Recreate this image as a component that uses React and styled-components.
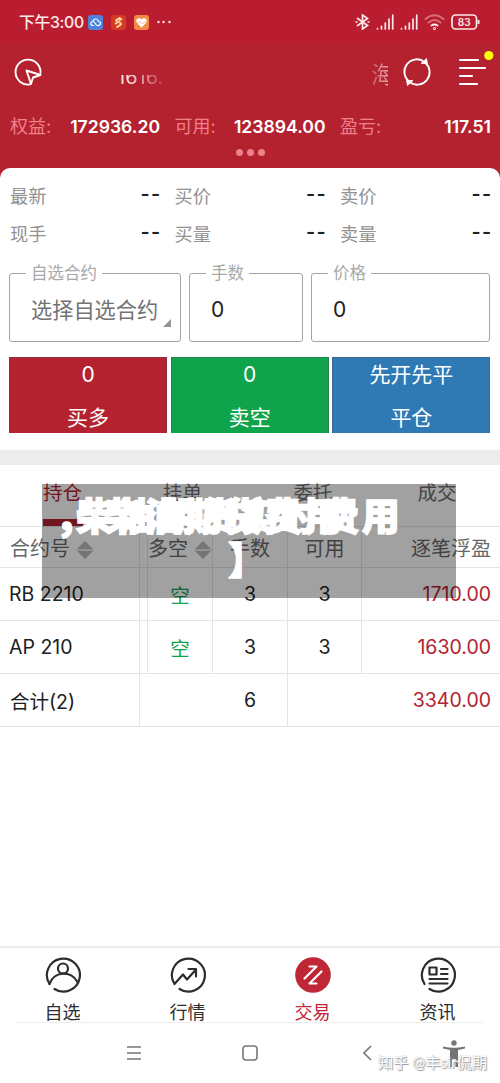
import React from 'react';
import styled, { createGlobalStyle } from 'styled-components';

const colours = {
  red: '#b42230',
  green: '#0fa44c',
  blue: '#2f7ab5',
  pink: '#f0808b',
  text: '#202020',
  muted: '#929292',
  line: '#e4e4e4'
};

const GlobalStyle = createGlobalStyle`
  * { box-sizing: border-box; }
  body {
    margin: 0;
    background: #fff;
    font-family: Inter, "Noto Sans CJK SC", sans-serif;
    color: ${ colours.text };
  }
`;

const Screen = styled.div`
  position: relative;
  display: flex;
  flex-direction: column;
  width: 500px;
  height: 1083px;
  overflow: hidden;
  background: #fff;
`;

const StatusBar = styled.div`
  display: flex;
  align-items: center;
  justify-content: space-between;
  height: 44px;
  padding: 0 20px 0 19px;
  background: #b91d2f;
  color: #fce9ea;
`;

const Clock = styled.span`
  width: 69px;
  font-size: 15.8px;
  font-weight: 500;
  line-height: 24px;
  letter-spacing: -0.3px;
  padding-top: 1px;
  white-space: nowrap;
`;

const StatusGroup = styled.div`
  display: flex;
  align-items: center;
  gap: ${ props => props.gap }px;
`;

const Header = styled.header`
  height: 136px;
  flex: none;
  background: ${ colours.red };
  color: #fff;
`;

const TitleRow = styled.div`
  display: flex;
  align-items: center;
  height: 56px;
  padding: 0 5px 0 13px;
`;

const Faded = styled.div`
  height: ${ props => props.h }px;
  width: ${ props => props.w }px;
  margin-left: ${ props => props.gap }px;
  margin-top: ${ props => props.drop || 0 }px;
  display: flex;
  align-items: flex-end;
  overflow: hidden;
  white-space: nowrap;
  font-size: ${ props => props.size }px;
  line-height: ${ props => props.size }px;
  color: #f8dfe1;
  mask-image: linear-gradient(${ props => props.fade });
`;

const IconSlot = styled.div`
  display: flex;
  margin-left: ${ props => props.gap || 0 }px;
`;

const Balances = styled.div`
  display: grid;
  grid-template-columns: 150px 151px 151px;
  column-gap: 14.5px;
  height: 52px;
  padding: 2px 0 0 10px;
  align-items: center;
  font-size: 18px;
`;

const Pair = styled.div`
  display: flex;
  justify-content: space-between;
  align-items: center;
  white-space: nowrap;
  line-height: 24px;
`;

const BalanceLabel = styled.span`
  color: ${ colours.pink };
`;

const BalanceValue = styled.span`
  font-weight: 600;
  font-size: 17.6px;
`;

const Dots = styled.div`
  display: flex;
  justify-content: center;
  gap: 4px;
  margin-top: -3px;
`;

const Dot = styled.span`
  width: 7px;
  height: 7px;
  border-radius: 50%;
  background: ${ colours.pink };
`;

const Panel = styled.section`
  height: 282px;
  flex: none;
  margin-top: -12px;
  padding-top: 9px;
  border-radius: 10px 10px 0 0;
  background: #fff;
`;

const Quotes = styled.div`
  display: grid;
  grid-template-columns: 150px 151px 151px;
  grid-auto-rows: 38px;
  column-gap: 14.5px;
  padding: 0 0 0 10px;
`;

const QuoteLabel = styled.span`
  font-size: 18.2px;
  color: ${ colours.muted };
`;

const Dashes = styled.span`
  font-family: Lato, sans-serif;
  font-size: 26px;
  letter-spacing: 0.7px;
  margin: -7px -1px 0 0;
`;

const Fields = styled.div`
  display: grid;
  grid-template-columns: 172px 114px 179px;
  column-gap: 8px;
  padding: 11px 0 0 9px;
`;

const Field = styled.fieldset`
  position: relative;
  height: 78px;
  min-width: 0;
  margin: 0;
  padding: 0 0 0 21px;
  border: 1px solid #a4a4a4;
  border-radius: 3px;
  display: flex;
  align-items: center;
  font-size: ${ props => props.big ? 21.2 : 21 }px;
  color: ${ props => props.big ? '#737373' : colours.text };
  white-space: nowrap;
`;

const Legend = styled.legend`
  margin-left: -5px;
  padding: 0 5px;
  font-size: 16.5px;
  line-height: 18px;
  color: #a8a8a8;
`;

const FieldValue = styled.span`
  line-height: 30px;
  padding-bottom: 3px;
`;

const Corner = styled.i`
  position: absolute;
  right: 9px;
  bottom: 14px;
  border-left: 8px solid transparent;
  border-bottom: 8px solid #949494;
`;

const Orders = styled.div`
  display: grid;
  grid-template-columns: repeat(3, 158px);
  column-gap: 3.7px;
  padding: 15px 0 0 9px;
`;

const OrderButton = styled.button`
  display: flex;
  flex-direction: column;
  justify-content: space-between;
  align-items: center;
  height: 76px;
  border: 1px solid rgba(80, 80, 80, 0.4);
  border-bottom-width: 0;
  padding: 1px 0 0;
  background: ${ props => props.bg };
  color: #fff;
  font: 21px/31px Inter, "Noto Sans CJK SC", sans-serif;
`;

const Divider = styled.div`
  height: 15px;
  flex: none;
  background: #ececec;
`;

const Tabs = styled.div`
  display: grid;
  grid-template-columns: 125px 115px 146px 102px;
  height: 62px;
  border-bottom: 1px solid ${ colours.line };
  flex: none;
`;

const Tab = styled.div`
  display: flex;
  flex-direction: column;
  align-items: center;
  justify-content: space-between;
  padding-top: 14px;
  font-size: 19.5px;
  line-height: 28px;
  color: ${ props => props.active ? '#b42230' : '#6d6d6d' };
  &:after {
    content: "";
    width: 40px;
    height: 7px;
    background: ${ props => props.active ? '#b42230' : 'transparent' };
  }
`;

const Row = styled.div`
  display: grid;
  grid-template-columns: ${ props => props.total ? '140px 148px 212px' : '140px 8px 65px 75px 74px 138px' };
  height: ${ props => props.head ? 41 : 53 }px;
  flex: none;
  border-bottom: 1px solid ${ colours.line };
  font-size: ${ props => props.head ? 20 : 19.5 }px;
  color: ${ props => props.head ? '#686868' : colours.text };
`;

const Cell = styled.div`
  display: flex;
  align-items: center;
  justify-content: ${ props => props.align || 'center' };
  padding: ${ props => props.pad || '0' };
  border-right: ${ props => props.last ? 0 : 1 }px solid ${ colours.line };
  color: ${ props => props.tone || 'inherit' };
  white-space: nowrap;
  min-width: 0;
`;

const Sort = styled.i`
  flex: none;
  width: 18px;
  height: 18px;
  margin-left: 6px;
  margin-top: 6px;
  background: linear-gradient(#b9b9b9 0 8px, #e8e8e8 8px 10px, #b9b9b9 10px);
  clip-path: polygon(50% 0, 100% 50%, 50% 100%, 0 50%);
`;

const Banner = styled.div`
  position: absolute;
  left: 42px;
  top: 484px;
  width: 414px;
  height: 114px;
  background: rgba(0, 0, 0, 0.37);
  color: #fff;
`;

const BannerText = styled.span`
  position: absolute;
  left: ${ props => props.x }px;
  top: ${ props => props.y }px;
  font-family: "Noto Sans CJK SC", sans-serif;
  font-size: 38px;
  font-weight: 900;
  letter-spacing: ${ props => props.track || 0 }px;
  line-height: 46px;
  white-space: nowrap;
  -webkit-text-stroke: 1.4px #fff;
`;

const Spacer = styled.div`
  flex: 1;
`;

const BottomNav = styled.nav`
  display: grid;
  grid-template-columns: repeat(4, 1fr);
  height: 76px;
  flex: none;
  border-top: 2px solid #ececec;
`;

const NavItem = styled.div`
  display: flex;
  flex-direction: column;
  align-items: center;
  padding-top: 9px;
  gap: 7px;
  font-size: 18px;
  line-height: 26px;
  color: ${ props => props.active ? '#bf2636' : '#2d2d2d' };
`;

const SystemNav = styled.div`
  position: relative;
  display: flex;
  align-items: center;
  height: 61px;
  flex: none;
  margin: 0 17px;
  border-top: 1px solid #eee;
`;

const Watermark = styled.div`
  position: absolute;
  left: 361px;
  top: 28px;
  font-family: Lato, "Noto Sans CJK SC", sans-serif;
  font-size: 15.3px;
  line-height: 22px;
  color: #fff;
  text-shadow: 0 0 1px #999, 1px 1px 1px #999;
  white-space: nowrap;
`;

const AppIcon = ({ bg, children }) => (
  <svg width='15' height='15' viewBox='0 0 15 15' fill='none' stroke='#fff' strokeWidth='1.4'>
    <rect width='15' height='15' rx='3' fill={ bg } stroke='none' />
    { children }
  </svg>
);

const Signal = () => (
  <svg width='18' height='16' stroke='#fce9ea' strokeWidth='1.7' strokeLinecap='round'>
    <path d='M1.5 14.8v-.3M5.5 15v-2.7M9.3 15V9.2M13 15V5M16.7 15V1.2' />
  </svg>
);

const NavIcon = ({ children }) => (
  <svg width='36' height='36' viewBox='0 0 36 36' fill='none' stroke='#2d2d2d' strokeWidth='2.2' strokeLinecap='round' strokeLinejoin='round'>
    { children }
  </svg>
);

const balances = [['权益:', '172936.20'], ['可用:', '123894.00'], ['盈亏:', '117.51']];
const quotes = ['最新', '买价', '卖价', '现手', '买量', '卖量'];
const positions = [
  { name: 'RB 2210', qty: 3, free: 3, profit: '1710.00' },
  { name: 'AP 210', qty: 3, free: 3, profit: '1630.00' }
];

const App = () => (
  <Screen>
    <GlobalStyle />
    <StatusBar>
      <StatusGroup gap={ 0 }>
        <Clock>下午3:00</Clock>
        <StatusGroup gap={ 8 }>
          <AppIcon bg='#4d83df'><path d='M6 10.5H4.800a2 2 0 0 1 0-4q1.200 0 2.200 1.500l1 1.500c1.300 1.800 4.500 1 4.500-1 0-1.200-1-2-2-2C10 3.500 6 3 5 6' strokeWidth='1.200' /></AppIcon>
          <AppIcon bg='#d63a22'><path d='m4.500 5.500 5-3M4.500 5.500l6 3M4 9l2.500-1.500M5.500 12.500l5-3.500M8 5.500l3-1.700' stroke='#ffdfa5' strokeWidth='1.800' /></AppIcon>
          <AppIcon bg='#f28a47'><path d='M7.500 12.500 3 8C.500 4 5.500 1.500 7.500 4.500 9.500 1.500 14.500 4 12 8z' fill='#fff' stroke='none' /><path d='m3 8.500 2.500-2 2 2 4-1.500' stroke='#f28a47' strokeWidth='.6' /></AppIcon>
          <svg width='18' height='4' fill='#fce9ea'><circle cx='6.500' cy='2' r='1.200' /><circle cx='12.500' cy='2' r='1.200' /><circle cx='.500' cy='2' r='0' /><circle cx='1.500' cy='2' r='1.200' /></svg>
        </StatusGroup>
      </StatusGroup>
      <StatusGroup gap={ 6 }>
        <svg width='15' height='16' fill='none' stroke='#fce9ea' strokeWidth='1.7'><path d='m2 4 10.500 7.500-5 3.500V1l5 3.500L2 12M.500 8h2M12.500 8h2' /></svg>
        <Signal />
        <Signal />
        <svg width='21' height='16' fill='none' stroke='#fce9ea' strokeWidth='2' strokeLinecap='round'>
          <path d='M1.500 5q9-7.500 18 0M4.500 8.500q6-5 12 0' opacity='.4' />
          <path d='M7.500 11.500q3-2.200 6 0' /><circle cx='10.500' cy='14.500' r='.5' />
        </svg>
        <svg width='29' height='16' fill='none' stroke='#fce9ea' strokeWidth='1.7'>
          <rect x='1' y='1' width='24.500' height='14' rx='3.500' /><path d='M27.500 6v4' strokeWidth='2' />
          <text x='13.2' y='11.8' textAnchor='middle' fontSize='10' fontWeight='600' fill='#fce9ea' stroke='none'>83</text>
        </svg>
      </StatusGroup>
    </StatusBar>
    <Header>
      <TitleRow>
        <svg width='30' height='30' fill='none' stroke='#fff' strokeWidth='1.9' strokeLinecap='round' strokeLinejoin='round'>
          <path d='M16.500 27.500A12.500 12.500 0 1 1 27.500 16' /><path d='m13.500 13.500 14 4.500-7.500 2.500-2 6.500z' />
        </svg>
        <Faded w={ 70 } h={ 12 } gap={ 74 } drop={ 17 } size={ 20 } fade='to right, #000 15%, transparent 75%'>1616.</Faded>
        <Faded w={ 17 } h={ 25 } gap={ 184 } drop={ 4 } size={ 23 } fade='to right, rgba(0,0,0,.25), rgba(0,0,0,.7)'>海</Faded>
        <IconSlot gap={ 14 }>
          <svg width='30' height='30' fill='none' stroke='#fff' strokeWidth='1.9'>
            <path d='M7 24.500A12.500 12.500 0 0 1 21.500 4.200M23 5.500A12.500 12.500 0 0 1 8.500 25.800' />
            <path d='m19 6.500h6.500l-1-5zM11 23.500H4.500l1 5z' fill='#fff' strokeWidth='.8' />
          </svg>
        </IconSlot>
        <IconSlot gap={ 26 }>
          <svg width='37' height='44' stroke='#fff' strokeWidth='2.2' strokeLinecap='round'>
            <path d='M2 10h18M2 18h25M2 26h12M2 34h17' /><circle cx='30.800' cy='5.500' r='4.600' fill='#ff0' stroke='none' />
          </svg>
        </IconSlot>
      </TitleRow>
      <Balances>
        { balances.map(([label, value]) => (
          <Pair key={ label }><BalanceLabel>{ label }</BalanceLabel><BalanceValue>{ value }</BalanceValue></Pair>
        )) }
      </Balances>
      <Dots><Dot /><Dot /><Dot /></Dots>
    </Header>
    <Panel>
      <Quotes>
        { quotes.map(label => (
          <Pair key={ label }><QuoteLabel>{ label }</QuoteLabel><Dashes>--</Dashes></Pair>
        )) }
      </Quotes>
      <Fields>
        <Field big><Legend>自选合约</Legend><FieldValue>选择自选合约</FieldValue><Corner /></Field>
        <Field><Legend>手数</Legend><FieldValue>0</FieldValue></Field>
        <Field><Legend>价格</Legend><FieldValue>0</FieldValue></Field>
      </Fields>
      <Orders>
        <OrderButton bg={ colours.red }><span>0</span><span>买多</span></OrderButton>
        <OrderButton bg={ colours.green }><span>0</span><span>卖空</span></OrderButton>
        <OrderButton bg={ colours.blue }><span>先开先平</span><span>平仓</span></OrderButton>
      </Orders>
    </Panel>
    <Divider />
    <Tabs>
      <Tab active>持仓</Tab>
      <Tab>挂单</Tab>
      <Tab>委托</Tab>
      <Tab>成交</Tab>
    </Tabs>
    <Row head>
      <Cell align='flex-start' pad='0 0 0 10px'>合约号<Sort /></Cell>
      <Cell />
      <Cell>多空<Sort /></Cell>
      <Cell>手数</Cell>
      <Cell>可用</Cell>
      <Cell last align='flex-end' pad='0 9px 0 0'>逐笔浮盈</Cell>
    </Row>
    { positions.map(item => (
      <Row key={ item.name }>
        <Cell align='flex-start' pad='0 0 0 9px'>{ item.name }</Cell>
        <Cell />
        <Cell tone={ colours.green }>空</Cell>
        <Cell>{ item.qty }</Cell>
        <Cell>{ item.free }</Cell>
        <Cell last align='flex-end' pad='0 9px 0 0' tone={ colours.red }>{ item.profit }</Cell>
      </Row>
    )) }
    <Row total>
      <Cell align='flex-start' pad='0 0 0 10px'>合计(2)</Cell>
      <Cell align='flex-end' pad='0 31px 0 0'>6</Cell>
      <Cell last align='flex-end' pad='0 9px 0 0' tone={ colours.red }>3340.00</Cell>
    </Row>
    <Banner>
      <BannerText x={ 18 } y={ 7 } track={ 2.8 }>,柴油期货实时费用</BannerText>
      <BannerText x={ 62 } y={ 7 } track={ 2 }>柴油期货费用</BannerText>
      <BannerText x={ 186 } y={ 51 }>】</BannerText>
    </Banner>
    <Spacer />
    <BottomNav>
      <NavItem>
        <NavIcon><path d='M4.500 27A16.500 16.500 0 1 1 9.500 32' /><circle cx='18' cy='11.500' r='5' /><path d='M4.500 27c4-13 22-14 28-2' /></NavIcon>
        自选
      </NavItem>
      <NavItem>
        <NavIcon><path d='M4.500 27A16.500 16.500 0 1 1 9.500 32M4.500 27 13 17.500l4 5 9-10M18.500 12H26v7.500' /></NavIcon>
        行情
      </NavItem>
      <NavItem active>
        <NavIcon><circle cx='18' cy='18' r='17.8' fill='#bf2636' stroke='none' /><path d='M14.500 9.500H21.500L9.500 21.500M26.500 14.500l-12 12H21.500' stroke='#fff' /></NavIcon>
        交易
      </NavItem>
      <NavItem>
        <NavIcon><path d='M4.500 27A16.500 16.500 0 1 1 9.500 32M9.500 10.500h7v7h-7zM21 12h6.500M21 17h6.500M9.500 22h18M9.500 26.500h18' /></NavIcon>
        资讯
      </NavItem>
    </BottomNav>
    <SystemNav>
      <IconSlot gap={ 109 }><svg width='16' height='14' stroke='#777' strokeWidth='1.5'><path d='M1 1h14M1 7h14M1 13h14' /></svg></IconSlot>
      <IconSlot gap={ 100 }><svg width='16' height='16' fill='none' stroke='#777' strokeWidth='1.6'><rect x='1' y='1' width='14' height='14' rx='3' /></svg></IconSlot>
      <IconSlot gap={ 105 }><svg width='9' height='16' fill='none' stroke='#777' strokeWidth='1.6'><path d='M8 1 1 8l7 7' /></svg></IconSlot>
      <IconSlot gap={ 70 }><svg width='24' height='27' fill='#747474'><circle cx='12' cy='3' r='2.7' /><path d='M1 6.500q11 2.500 22 0v2l-7 1.500v17h-2.500v-8h-3v8H8V10L1 8.500z' /></svg></IconSlot>
      <Watermark>知乎 @丰sir侃期</Watermark>
    </SystemNav>
  </Screen>
);

export default App;
